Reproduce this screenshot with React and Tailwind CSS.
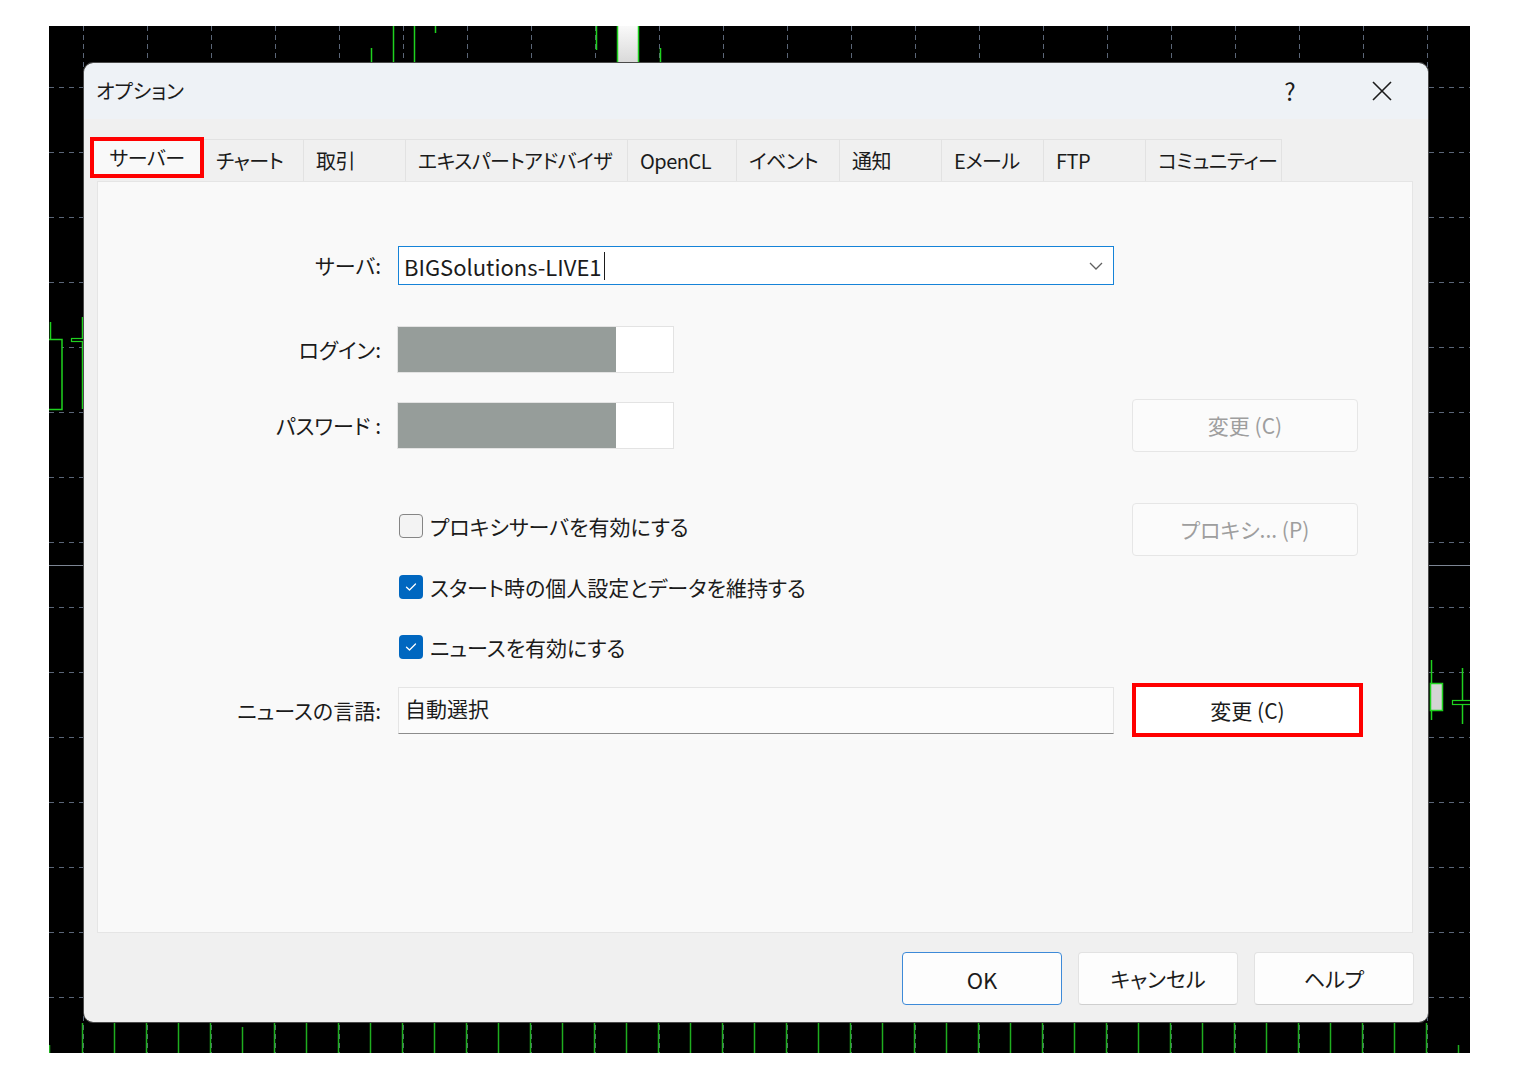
import React from "react";

const font = "font-['Noto_Sans_CJK_JP','Noto_Sans',sans-serif] [font-feature-settings:'palt']";

function ChartBg() {
  const vx = Array.from({ length: 22 }, (_, k) => 34 + 64 * k);
  const hy = Array.from({ length: 16 }, (_, k) => 61 + 65 * k);
  const bars = Array.from({ length: 45 }, (_, k) => 33 + 32 * k).filter((x) => x < 1421);
  return (
    <svg className="absolute inset-0" width="1421" height="1027" viewBox="0 0 1421 1027">
      {vx.map((x) => (
        <line key={"v" + x} x1={x + 0.5} x2={x + 0.5} y1="0" y2="1027" stroke="#5b6678" strokeWidth="1" strokeDasharray="5 4" />
      ))}
      {hy.map((y) => (
        <line key={"h" + y} x1="0" x2="1421" y1={y + 0.5} y2={y + 0.5} stroke="#5b6678" strokeWidth="1" strokeDasharray="5 5" />
      ))}
      <line x1="0" x2="1421" y1="539.5" y2="539.5" stroke="#7c8593" strokeWidth="1" />
      <line x1="322.5" x2="322.5" y1="22" y2="36" stroke="#1fd21f" strokeWidth="1.5" />
      <line x1="344.5" x2="344.5" y1="0" y2="36" stroke="#1fd21f" strokeWidth="1.5" />
      <line x1="365.5" x2="365.5" y1="0" y2="36" stroke="#1fd21f" strokeWidth="1.5" />
      <line x1="386.5" x2="386.5" y1="0" y2="7" stroke="#1fd21f" strokeWidth="1.5" />
      <line x1="547.5" x2="547.5" y1="0" y2="24" stroke="#1fd21f" strokeWidth="1.5" />
      <line x1="611.5" x2="611.5" y1="22" y2="36" stroke="#1fd21f" strokeWidth="1.5" />
      <defs>
        <linearGradient id="cg" x1="0" y1="0" x2="0" y2="1">
          <stop offset="0" stopColor="#fbfbfb" />
          <stop offset="1" stopColor="#d8d8d8" />
        </linearGradient>
      </defs>
      <rect x="568.5" y="-2" width="21" height="40" fill="url(#cg)" stroke="#1fd21f" strokeWidth="1.5" />
      <line x1="1.5" x2="1.5" y1="296" y2="313" stroke="#1fd21f" strokeWidth="1.5" />
      <rect x="-2" y="313.5" width="15" height="70" fill="black" stroke="#1fd21f" strokeWidth="1.5" />
      <line x1="33.5" x2="33.5" y1="291" y2="383" stroke="#1fd21f" strokeWidth="1.5" />
      <rect x="22.5" y="312.5" width="12" height="3" fill="black" stroke="#1fd21f" strokeWidth="1.2" />
      <line x1="1382.5" x2="1382.5" y1="634" y2="694" stroke="#1fd21f" strokeWidth="1.5" />
      <rect x="1381.5" y="657.5" width="12" height="27" fill="#d4d4d4" stroke="#1fd21f" strokeWidth="1.5" />
      <line x1="1413.5" x2="1413.5" y1="642" y2="698" stroke="#1fd21f" strokeWidth="1.5" />
      <rect x="1403.5" y="674.5" width="20" height="4" fill="black" stroke="#1fd21f" strokeWidth="1.2" />
      <line x1="0.5" x2="0.5" y1="1019" y2="1027" stroke="#1fae1f" strokeWidth="1.5" />
      {bars.map((x, i) => (
        <line key={"b" + x} x1={x + 0.5} x2={x + 0.5} y1={i === 5 ? 1001 : x > 1400 ? 1019 : 997} y2="1027" stroke="#1fae1f" strokeWidth="1.5" />
      ))}
    </svg>
  );
}

function Check({ checked }) {
  return checked ? (
    <div className="w-[24px] h-[24px] rounded-[4px] bg-[#0067c0] flex items-center justify-center shrink-0">
      <svg width="12" height="10" viewBox="0 0 12 10">
        <path d="M1.5 5.2 L4.5 8 L10.5 2" fill="none" stroke="white" strokeWidth="1.3" strokeLinecap="round" strokeLinejoin="round" />
      </svg>
    </div>
  ) : (
    <div className="w-[24px] h-[24px] rounded-[4px] border border-[#858585] bg-[#f3f3f3] shrink-0" />
  );
}

const tabs = [
  { t: "チャート", w: "w-[100px]" },
  { t: "取引", w: "w-[102px]" },
  { t: "エキスパートアドバイザ", w: "w-[222px]" },
  { t: "OpenCL", w: "w-[109px]" },
  { t: "イベント", w: "w-[103px]" },
  { t: "通知", w: "w-[102px]" },
  { t: "Eメール", w: "w-[102px]" },
  { t: "FTP", w: "w-[102px]" },
  { t: "コミュニティー", w: "w-[136px]" },
];

function DisabledBtn({ children }) {
  return (
    <div className="w-[226px] h-[53px] rounded-[4px] border border-[#e6e6e6] bg-[#fbfbfb] flex items-center justify-center text-[21px] text-[#9e9e9e] whitespace-nowrap">
      {children}
    </div>
  );
}

function Label({ children }) {
  return <div className="w-[283px] text-right text-[21px] text-[#1b1b1b] leading-none shrink-0 whitespace-nowrap">{children}</div>;
}

function Masked() {
  return (
    <div className="w-[277px] h-[47px] border border-[#e3e3e3] bg-white flex">
      <div className="w-[218px] h-full bg-[#969d9a]" />
    </div>
  );
}

export default function App() {
  return (
    <div className={`w-[1523px] h-[1078px] bg-white pl-[49px] pt-[26px] ${font}`}>
      <div className="relative w-[1421px] h-[1027px] bg-black pl-[34px] pt-[36px]">
        <ChartBg />
        <div className="relative w-[1346px] h-[961px] rounded-[10px] overflow-hidden border border-[#4a4a4a] flex flex-col">
          <div className="h-[56px] bg-[#eef2f6] flex items-center pl-[12px] shrink-0">
            <span className="text-[20px] text-[#1b1b1b] leading-none">オプション</span>
            <div className="ml-auto flex items-center">
              <div className="w-[46px] flex justify-center text-[24px] text-[#1b1b1b] leading-none">?</div>
              <div className="w-[46px] ml-[46px] mr-[23px] flex justify-center">
                <svg width="20" height="20" viewBox="0 0 20 20">
                  <path d="M1 1 L19 19 M19 1 L1 19" stroke="#1b1b1b" strokeWidth="1.6" fill="none" />
                </svg>
              </div>
            </div>
          </div>
          <div className="flex-1 bg-[#f0f0f0] pl-[13px] pr-[15px] pt-[20px] flex flex-col">
            <div className="flex h-[42px] items-start -ml-[7px]">
              <div className="w-[114px] h-[41px] -mt-[2px] border-[4px] border-[#ff0000] bg-[#f9f9f9] flex items-center justify-center text-[20px] tracking-[-0.5px] text-[#1b1b1b] leading-none whitespace-nowrap">
                サーバー
              </div>
              {tabs.map((tb) => (
                <div
                  key={tb.t}
                  className={`${tb.w} h-[42px] border-t border-r border-[#e2e2e2] bg-[#f0f0f0] flex items-center pl-[12px] text-[20px] tracking-[-0.5px] text-[#1b1b1b] leading-none whitespace-nowrap overflow-hidden`}
                >
                  {tb.t}
                </div>
              ))}
            </div>
            <div className="h-[752px] bg-[#f9f9f9] border border-[#e5e5e5] pt-[64px] flex flex-col">
              <div className="flex items-center h-[39px]">
                <Label>サーバ:</Label>
                <div className="ml-[17px] w-[716px] h-full border border-[#1683d8] bg-white flex items-center pl-[5px] pr-[10px]">
                  <span className="text-[22px] text-[#1b1b1b] leading-none">BIGSolutions-LIVE1</span>
                  <span className="ml-[2px] w-[1px] h-[28px] bg-[#1b1b1b]" />
                  <svg className="ml-auto" width="14" height="8" viewBox="0 0 14 8">
                    <path d="M1 1 L7 7 L13 1" stroke="#606060" strokeWidth="1.3" fill="none" />
                  </svg>
                </div>
              </div>
              <div className="flex items-center h-[47px] mt-[41px]">
                <Label>ログイン:</Label>
                <div className="ml-[16px]">
                  <Masked />
                </div>
              </div>
              <div className="flex items-center h-[53px] mt-[26px]">
                <Label>パスワード :</Label>
                <div className="ml-[16px]">
                  <Masked />
                </div>
                <div className="ml-[458px]">
                  <DisabledBtn>変更 (C)</DisabledBtn>
                </div>
              </div>
              <div className="flex items-start h-[53px] mt-[51px]">
                <div className="w-[283px] shrink-0" />
                <div className="ml-[18px] w-[715px] mt-[11px] flex items-center gap-[7px] text-[21px] text-[#1b1b1b] leading-none">
                  <Check checked={false} />
                  <span>プロキシサーバを有効にする</span>
                </div>
                <div className="ml-[18px]">
                  <DisabledBtn>プロキシ... (P)</DisabledBtn>
                </div>
              </div>
              <div className="flex items-center h-[24px] mt-[19px]">
                <div className="w-[283px] shrink-0" />
                <div className="ml-[18px] flex items-center gap-[7px] text-[21px] text-[#1b1b1b] leading-none">
                  <Check checked />
                  <span>スタート時の個人設定とデータを維持する</span>
                </div>
              </div>
              <div className="flex items-center h-[24px] mt-[36px]">
                <div className="w-[283px] shrink-0" />
                <div className="ml-[18px] flex items-center gap-[7px] text-[21px] text-[#1b1b1b] leading-none">
                  <Check checked />
                  <span>ニュースを有効にする</span>
                </div>
              </div>
              <div className="flex items-center h-[54px] mt-[24px]">
                <Label>ニュースの言語:</Label>
                <div className="ml-[17px] w-[716px] h-[47px] border border-[#e5e5e5] border-b-[#8c8c8c] bg-[#fbfbfb] flex items-center pl-[6px] pb-[4px] text-[21px] text-[#1b1b1b] leading-none">
                  自動選択
                </div>
                <div className="ml-[18px] w-[231px] h-[54px] border-[4px] border-[#ff0000] bg-white flex items-center justify-center text-[21px] text-[#1b1b1b] leading-none">
                  変更 (C)
                </div>
              </div>
            </div>
            <div className="mt-[19px] flex justify-end gap-[16px] -mr-[1px]">
              <div className="w-[160px] h-[53px] rounded-[4px] border border-[#3d8ad8] bg-[#fdfdfd] flex items-center justify-center text-[22px] text-[#1b1b1b] leading-none">
                OK
              </div>
              <div className="w-[160px] h-[53px] rounded-[4px] border border-[#e2e2e2] border-b-[#cfcfcf] bg-[#fdfdfd] flex items-center justify-center text-[21px] text-[#1b1b1b] leading-none">
                キャンセル
              </div>
              <div className="w-[160px] h-[53px] rounded-[4px] border border-[#e2e2e2] border-b-[#cfcfcf] bg-[#fdfdfd] flex items-center justify-center text-[21px] text-[#1b1b1b] leading-none">
                ヘルプ
              </div>
            </div>
          </div>
        </div>
      </div>
    </div>
  );
}
